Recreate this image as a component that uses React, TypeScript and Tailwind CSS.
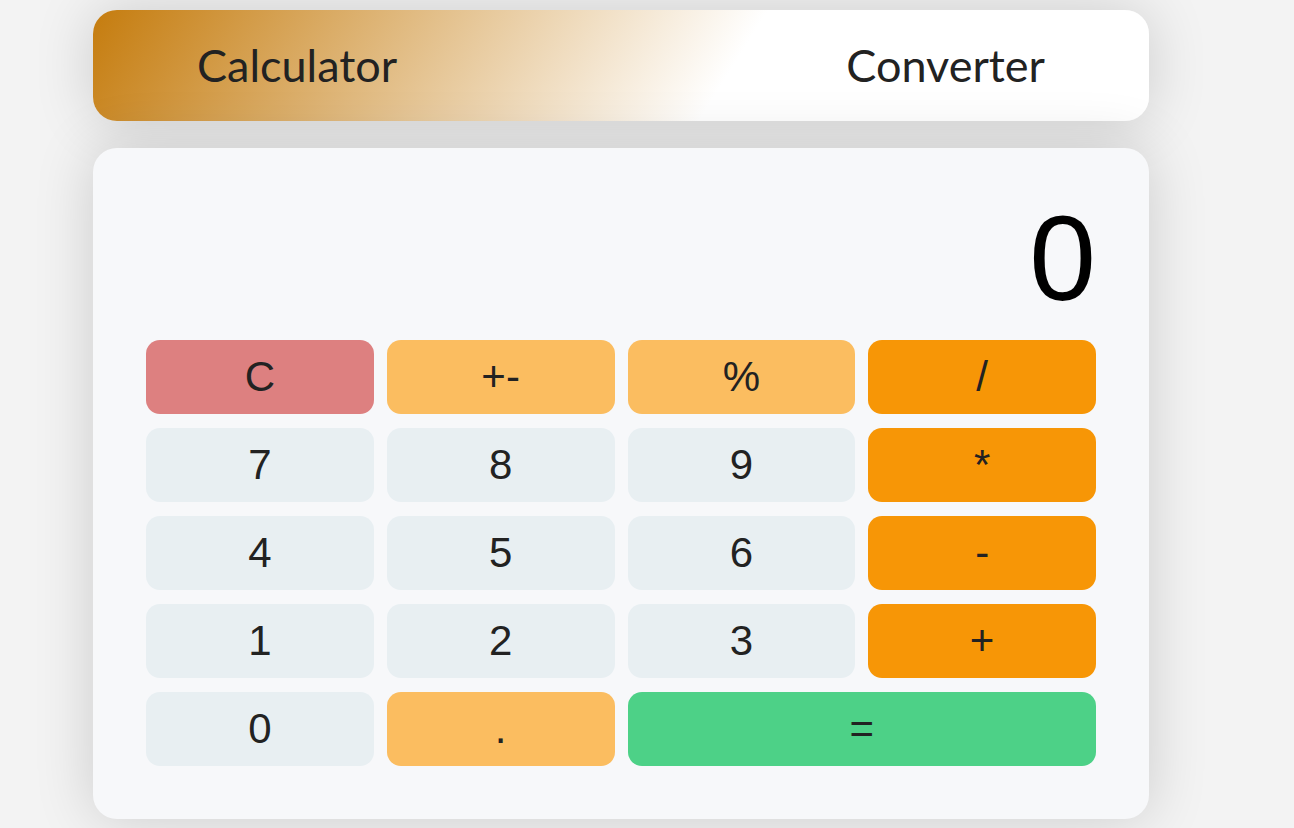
const keys = [
  { label: "C", tone: "bg-[#dd8080]" },
  { label: "+-", tone: "bg-[#fbbd60]" },
  { label: "%", tone: "bg-[#fbbd60]" },
  { label: "/", tone: "bg-[#f79606]" },
  { label: "7", tone: "bg-[#e8eff2]" },
  { label: "8", tone: "bg-[#e8eff2]" },
  { label: "9", tone: "bg-[#e8eff2]" },
  { label: "*", tone: "bg-[#f79606]" },
  { label: "4", tone: "bg-[#e8eff2]" },
  { label: "5", tone: "bg-[#e8eff2]" },
  { label: "6", tone: "bg-[#e8eff2]" },
  { label: "-", tone: "bg-[#f79606]" },
  { label: "1", tone: "bg-[#e8eff2]" },
  { label: "2", tone: "bg-[#e8eff2]" },
  { label: "3", tone: "bg-[#e8eff2]" },
  { label: "+", tone: "bg-[#f79606]" },
  { label: "0", tone: "bg-[#e8eff2]" },
  { label: ".", tone: "bg-[#fbbd60]" },
  { label: "=", tone: "bg-[#4dd187] col-span-2" },
];

export default function App() {
  return (
    <main className="min-h-screen bg-[#f3f3f3] pt-[10px] pl-[93px] font-['Liberation_Sans',Arial,sans-serif] text-[#222]">
      <div className="w-[1056px]">
        <nav className="flex h-[111px] items-center justify-between rounded-[24px] bg-[linear-gradient(122deg,#c57c0e_0%,#fff_60%)] px-[104px] font-['Lato',sans-serif] text-[45px] leading-none shadow-[0_0_60px_rgba(0,0,0,0.16)]">
          <button className="text-[#222]">Calculator</button>
          <button className="text-[#222]">Converter</button>
        </nav>

        <section className="mt-[27px] rounded-[24px] bg-[#f7f8fa] px-[53px] pb-[53px] pt-[50px] shadow-[0_0_60px_rgba(0,0,0,0.16)]">
          <div className="pb-[22px] text-right text-[120px] leading-none text-black">0</div>
          <div className="grid grid-cols-4 gap-x-[13px] gap-y-[14px]">
            {keys.map((key) => (
              <button
                key={key.label}
                className={`flex h-[74px] items-center justify-center rounded-[14px] text-[42px] leading-none text-[#222] ${key.tone}`}
              >
                {key.label}
              </button>
            ))}
          </div>
        </section>
      </div>
    </main>
  );
}
